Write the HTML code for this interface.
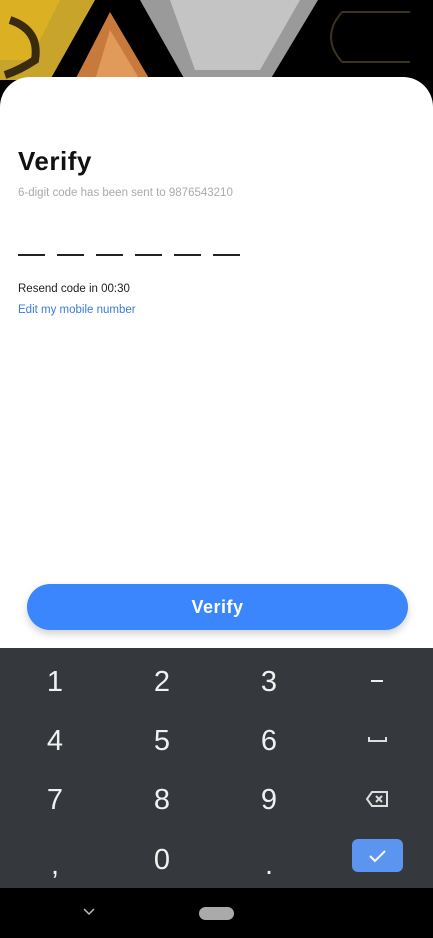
<!DOCTYPE html>
<html><head><meta charset="utf-8"><style>
*{margin:0;padding:0;box-sizing:border-box}
body{width:433px;height:938px;overflow:hidden;position:relative;background:#fff;font-family:"Liberation Sans",sans-serif}
.abs{position:absolute}
.k{position:absolute;color:#f1f1f1;font-size:29px;width:60px;text-align:center;line-height:30px;font-family:"Liberation Sans",sans-serif}
</style></head><body>
<svg class="abs" style="left:0;top:0" width="433" height="110">
<rect width="433" height="110" fill="#000"/>
<polygon points="0,0 95,0 50,80 0,80" fill="#c9a42a"/>
<polygon points="0,0 60,0 30,60 0,60" fill="#e0b320" opacity="0.8"/>
<path d="M10,20 Q40,30 35,60 Q20,70 5,75" stroke="#3a2a10" stroke-width="8" fill="none"/>
<polygon points="110,12 75,80 150,80" fill="#c8793c"/>
<polygon points="110,30 95,80 140,80" fill="#e29a5a"/>
<polygon points="140,0 318,0 270,80 185,80" fill="#9a9a9a"/>
<polygon points="170,0 300,0 260,70 195,70" fill="#c4c4c4"/>
<path d="M342,12 L410,12 M342,62 L410,62 M342,12 Q320,37 342,62" stroke="#3a3320" stroke-width="2" fill="none"/>
</svg>
<div class="abs" style="left:0;top:77px;width:433px;height:600px;background:#fff;border-radius:30px 30px 0 0"></div>
<div class="abs" style="left:18px;top:146px;font-size:26px;font-weight:bold;color:#111;letter-spacing:0.5px">Verify</div>
<div class="abs" style="left:18px;top:187px;font-size:11.5px;color:#aaa">6-digit code has been sent to 9876543210</div>
<div class="abs" style="left:18px;top:254px;width:222px;height:2px;background:repeating-linear-gradient(90deg,#222 0 27px,transparent 27px 39px)"></div>
<div class="abs" style="left:18px;top:283px;font-size:11.5px;color:#222">Resend code in 00:30</div>
<div class="abs" style="left:18px;top:304px;font-size:11.5px;color:#3a7cd8">Edit my mobile number</div>
<div class="abs" style="left:27px;top:584px;width:381px;height:46px;background:#3b86fc;border-radius:23px;box-shadow:0 4px 8px rgba(0,0,0,0.18);color:#fff;font-size:18px;font-weight:bold;text-align:center;line-height:46px;letter-spacing:0.5px">Verify</div>
<div class="abs" style="left:0;top:648px;width:433px;height:240px;background:#35383c"></div>
<div class="k" style="left:25px;top:667px">1</div>
<div class="k" style="left:132px;top:667px">2</div>
<div class="k" style="left:239px;top:667px">3</div>
<div class="abs" style="left:371px;top:680px;width:12px;height:2px;background:#eee"></div>
<div class="k" style="left:25px;top:726px">4</div>
<div class="k" style="left:132px;top:726px">5</div>
<div class="k" style="left:239px;top:726px">6</div>
<div class="abs" style="left:368px;top:737px;width:19px;height:5px;border:2px solid #ddd;border-top:none"></div>
<div class="k" style="left:25px;top:785px">7</div>
<div class="k" style="left:132px;top:785px">8</div>
<div class="k" style="left:239px;top:785px">9</div>
<svg class="abs" style="left:365px;top:790px" width="24" height="18"><path d="M7,2 L22,2 L22,16 L7,16 L2,9 Z" fill="none" stroke="#ddd" stroke-width="2"/><path d="M11,6 L17,12 M17,6 L11,12" stroke="#ddd" stroke-width="2"/></svg>
<div class="k" style="left:25px;top:850px">,</div>
<div class="k" style="left:132px;top:845px">0</div>
<div class="k" style="left:239px;top:850px">.</div>
<div class="abs" style="left:352px;top:839px;width:51px;height:33px;background:#5c95f0;border-radius:6px"></div>
<svg class="abs" style="left:368px;top:848px" width="20" height="16"><path d="M2,8 L7,13 L17,3" stroke="#fff" stroke-width="2" fill="none"/></svg>
<div class="abs" style="left:0;top:888px;width:433px;height:50px;background:#000"></div>
<svg class="abs" style="left:83px;top:908px" width="12" height="8"><path d="M1,1 L6,6 L11,1" stroke="#bbb" stroke-width="1.5" fill="none"/></svg>
<div class="abs" style="left:199px;top:907px;width:35px;height:13px;background:#aaa;border-radius:7px"></div>
</body></html>
